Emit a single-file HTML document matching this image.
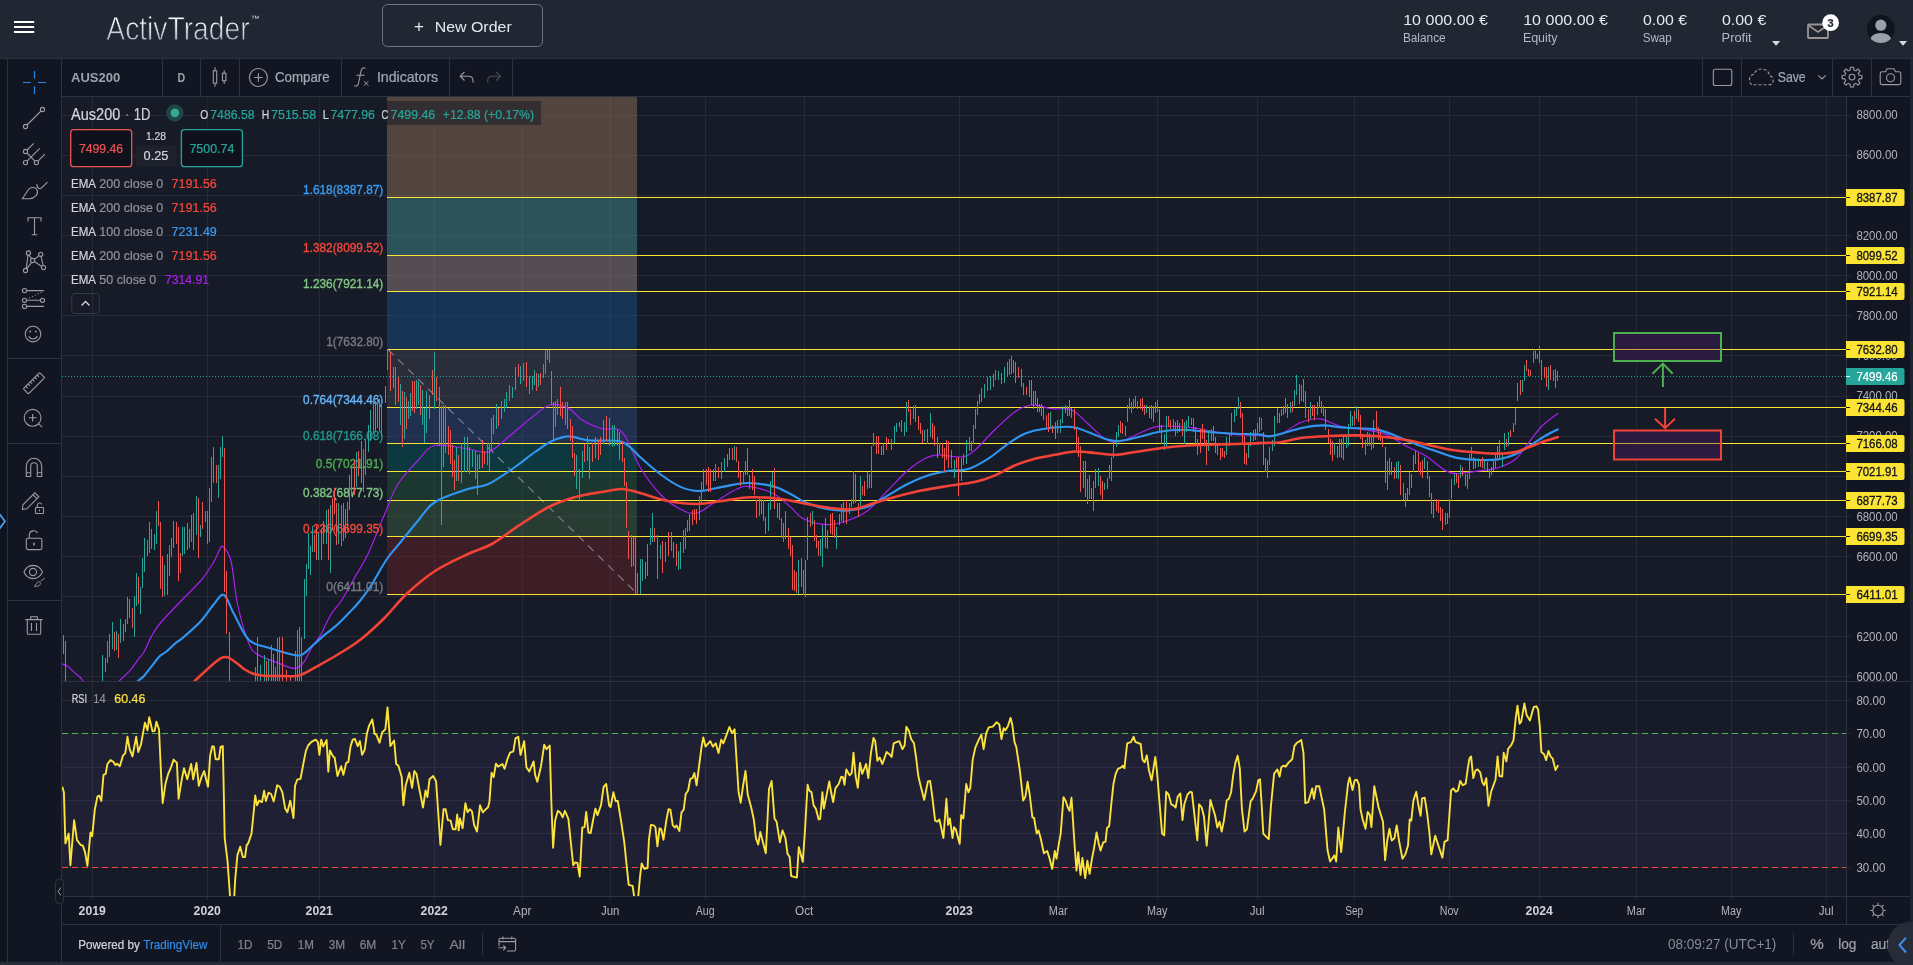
<!DOCTYPE html>
<html><head><meta charset="utf-8"><title>ActivTrader</title>
<style>
html,body{margin:0;padding:0}
body{width:1913px;height:965px;overflow:hidden;background:#10141f;position:relative;font-family:"Liberation Sans", sans-serif;}
svg{position:absolute;left:0;top:0;will-change:transform}
text{font-family:"Liberation Sans", sans-serif}
</style></head><body>
<svg width="1913" height="965" viewBox="0 0 1913 965">
<defs><clipPath id="cm"><rect x="62" y="97" width="1784" height="584"/></clipPath><clipPath id="cr"><rect x="62" y="682" width="1784" height="214"/></clipPath><linearGradient id="lg" x1="0" y1="0" x2="0" y2="1"><stop offset="0.25" stop-color="#ffffff"/><stop offset="1" stop-color="#8fa0ba"/></linearGradient></defs>
<rect x="8" y="59" width="54" height="903" fill="#121622"/>
<rect x="62" y="59" width="1848" height="903" fill="#121622"/>
<rect x="62" y="97" width="1784" height="584" fill="#171b27"/>
<rect x="62" y="682" width="1784" height="214" fill="#171b27"/>
<rect x="1910" y="58.5" width="3" height="907" fill="#1e2430"/>
<rect x="0" y="961.8" width="1913" height="3.2" fill="#272c38"/>
<path d="M92.5 97 V900 M207.5 97 V900 M319.5 97 V900 M434.5 97 V900 M522.5 97 V900 M610.5 97 V900 M705.5 97 V900 M804.5 97 V900 M959.5 97 V900 M1058.5 97 V900 M1157.5 97 V900 M1257.5 97 V900 M1354.5 97 V900 M1449.5 97 V900 M1539.5 97 V900 M1636.5 97 V900 M1731.5 97 V900 M1826.5 97 V900 M62 676.5 H1850 M62 636.5 H1850 M62 596.5 H1850 M62 556.5 H1850 M62 516.5 H1850 M62 476.5 H1850 M62 436.5 H1850 M62 396.5 H1850 M62 355.5 H1850 M62 315.5 H1850 M62 275.5 H1850 M62 235.5 H1850 M62 195.5 H1850 M62 155.5 H1850 M62 115.5 H1850 M62 867.5 H1850 M62 833.5 H1850 M62 800.5 H1850 M62 767.5 H1850 M62 733.5 H1850 M62 700.5 H1850" stroke="#262a38" stroke-width="1" fill="none"/>
<rect x="387" y="97.0" width="250" height="100.5" fill="rgba(141,111,85,0.5)"/>
<rect x="387" y="197.5" width="250" height="58.0" fill="rgba(65,137,141,0.5)"/>
<rect x="387" y="255.5" width="250" height="36.0" fill="rgba(145,129,125,0.5)"/>
<rect x="387" y="291.5" width="250" height="58.0" fill="rgba(25,77,129,0.5)"/>
<rect x="387" y="349.5" width="250" height="58.0" fill="rgba(61,65,77,0.5)"/>
<rect x="387" y="407.5" width="250" height="36.0" fill="rgba(41,69,117,0.5)"/>
<rect x="387" y="443.5" width="250" height="28.0" fill="rgba(5,85,89,0.5)"/>
<rect x="387" y="471.5" width="250" height="29.0" fill="rgba(33,81,57,0.5)"/>
<rect x="387" y="500.5" width="250" height="36.0" fill="rgba(57,93,65,0.5)"/>
<rect x="387" y="536.5" width="250" height="58.0" fill="rgba(101,33,37,0.5)"/>
<path d="M388 349.5 L637.5 594" stroke="#9598a1" stroke-width="1.2" stroke-dasharray="8 6" fill="none" opacity="0.75"/>
<path d="M387 197.5 H1846M387 255.5 H1846M387 291.5 H1846M387 349.5 H1846M387 407.5 H1846M387 443.5 H1846M387 471.5 H1846M387 500.5 H1846M387 536.5 H1846M387 594.5 H1846" stroke="#fbe434" stroke-width="1.2" fill="none"/>
<path d="M62 376.5 H1846" stroke="#26a69a" stroke-width="1" stroke-dasharray="1 2" fill="none"/>
<g clip-path="url(#cm)" fill="none" stroke-linejoin="round" stroke-linecap="round">
<path d="M62.0 663.8C63.1 664.3 66.5 665.4 68.4 666.7C70.3 668.1 71.7 670.2 73.6 671.9C75.5 673.6 78.2 675.5 79.8 677.0C81.4 678.5 81.3 678.8 83.0 681.0C84.7 683.2 85.2 688.5 90.0 690.0C94.8 691.5 107.1 691.5 112.0 690.0C116.9 688.5 116.1 684.4 119.2 681.0C122.3 677.6 127.3 673.6 130.6 669.8C133.9 666.0 136.7 661.4 138.9 658.4C141.1 655.4 141.9 655.6 144.0 652.0C146.1 648.4 148.6 641.4 151.3 636.6C154.0 631.9 155.1 629.4 160.0 623.5C164.9 617.6 174.2 608.2 181.0 601.0C187.8 593.8 196.2 586.0 201.0 580.5C205.8 575.0 207.6 571.4 209.9 568.0C212.2 564.6 213.3 562.8 214.8 560.0C216.3 557.2 217.7 553.2 219.0 551.0C220.3 548.8 220.8 544.8 222.8 546.5C224.8 548.2 228.6 551.4 231.0 561.0C233.4 570.6 234.7 590.8 237.5 604.0C240.3 617.2 244.5 631.8 247.6 640.0C250.7 648.2 250.7 649.6 256.0 653.5C261.3 657.4 273.2 661.1 279.6 663.6C286.0 666.1 290.3 668.4 294.2 668.4C298.1 668.4 300.1 666.8 303.0 663.4C305.9 660.0 308.8 652.4 311.7 647.7C314.6 643.0 317.4 640.6 320.5 635.1C323.6 629.6 327.0 620.9 330.6 615.0C334.2 609.1 337.9 606.2 341.9 600.0C345.9 593.8 350.2 585.3 354.6 577.6C359.0 569.9 363.0 564.6 368.0 554.0C373.0 543.4 379.7 525.7 384.7 514.0C389.7 502.3 392.4 492.9 398.0 484.0C403.6 475.1 411.8 466.9 418.0 460.5C424.2 454.1 426.7 447.4 435.0 445.5C443.3 443.6 459.1 447.9 468.0 449.0C476.9 450.1 481.8 454.0 488.5 452.0C495.2 450.0 501.8 442.3 508.5 437.0C515.2 431.7 521.7 425.3 528.6 420.0C535.5 414.7 543.3 406.9 550.0 405.0C556.7 403.1 563.7 406.1 569.0 408.6C574.3 411.1 576.5 416.6 582.0 420.0C587.5 423.4 595.3 426.7 602.0 428.7C608.7 430.7 615.7 425.6 622.0 432.0C628.3 438.4 633.7 456.7 640.0 467.0C646.3 477.3 653.3 487.0 660.0 494.0C666.7 501.0 673.8 505.8 680.0 509.0C686.2 512.2 690.8 514.4 697.0 513.0C703.2 511.6 710.3 504.7 717.0 500.7C723.7 496.7 731.5 491.4 737.0 489.0C742.5 486.6 743.8 485.8 750.0 486.6C756.2 487.4 767.2 490.6 774.0 494.0C780.8 497.4 785.5 502.8 790.5 507.0C795.5 511.2 797.9 516.0 804.0 519.0C810.1 522.0 819.8 524.4 827.0 524.7C834.2 525.0 840.2 523.0 847.0 520.7C853.8 518.4 860.7 515.7 867.5 510.7C874.3 505.7 880.9 497.3 887.6 490.6C894.3 483.9 901.5 475.8 907.6 470.5C913.7 465.2 919.0 461.6 924.0 459.0C929.0 456.4 931.5 455.1 937.7 454.8C943.9 454.5 954.9 457.7 961.0 457.0C967.1 456.3 968.9 455.0 974.5 450.5C980.1 446.0 987.9 436.4 994.6 430.0C1001.3 423.6 1008.6 416.2 1014.7 412.0C1020.8 407.8 1025.3 405.6 1031.4 405.0C1037.5 404.4 1044.8 407.8 1051.5 408.6C1058.2 409.4 1065.4 407.5 1071.5 410.0C1077.6 412.5 1082.4 418.9 1088.0 423.7C1093.6 428.5 1099.9 435.8 1105.0 438.8C1110.1 441.9 1112.8 442.9 1118.4 442.0C1124.0 441.1 1131.8 436.3 1138.5 433.7C1145.2 431.1 1149.6 427.4 1158.5 426.4C1167.4 425.4 1180.8 426.5 1192.0 427.7C1203.2 428.9 1214.3 432.4 1225.5 433.7C1236.7 435.0 1249.9 435.3 1259.0 435.4C1268.1 435.5 1273.2 436.5 1280.0 434.4C1286.8 432.3 1293.3 425.4 1300.0 422.8C1306.7 420.2 1313.4 418.3 1320.0 418.8C1326.6 419.3 1332.5 424.2 1339.7 426.0C1346.9 427.8 1355.3 428.0 1363.0 429.4C1370.7 430.8 1378.8 431.6 1386.0 434.4C1393.2 437.2 1399.3 442.4 1406.0 446.0C1412.7 449.6 1419.4 451.9 1426.0 456.0C1432.6 460.1 1440.3 468.0 1445.8 470.9C1451.3 473.8 1453.5 473.5 1459.0 473.5C1464.5 473.5 1472.4 471.9 1479.0 470.9C1485.6 469.9 1492.7 469.4 1498.8 467.5C1504.9 465.6 1510.4 463.4 1515.4 459.3C1520.4 455.2 1524.3 448.2 1528.7 442.7C1533.1 437.1 1537.2 430.9 1542.0 426.0C1546.8 421.1 1555.2 415.6 1557.8 413.5" stroke="#aa1ef0" stroke-width="1.2"/>
<path d="M132.0 688.0C133.0 686.8 135.9 683.0 137.9 681.0C139.9 679.0 141.8 678.4 144.0 676.0C146.2 673.6 148.7 670.0 151.3 666.7C153.9 663.4 157.2 658.8 159.6 656.3C162.0 653.8 163.1 654.2 165.8 652.0C168.5 649.8 173.3 645.0 176.0 642.8C178.7 640.5 177.8 642.1 182.0 638.5C186.2 634.9 195.7 626.8 201.0 621.0C206.3 615.2 210.2 608.3 214.0 604.0C217.8 599.7 220.7 593.3 224.0 595.0C227.3 596.7 229.8 606.5 234.0 614.0C238.2 621.5 243.1 634.3 249.0 640.0C254.9 645.7 261.8 645.5 269.5 648.0C277.2 650.5 289.8 654.2 295.4 655.2C301.0 656.2 300.1 655.7 303.0 654.0C305.9 652.3 309.4 648.4 313.0 645.2C316.6 642.1 320.3 638.5 324.3 635.1C328.3 631.8 332.6 628.9 336.8 625.1C341.0 621.3 345.4 616.7 349.4 612.5C353.4 608.3 356.9 604.8 360.7 600.0C364.5 595.2 367.7 590.8 372.0 584.0C376.3 577.2 381.7 566.7 386.6 559.5C391.5 552.3 396.3 547.5 401.5 541.0C406.7 534.5 412.4 527.2 418.0 520.7C423.6 514.2 426.7 507.3 435.0 502.0C443.3 496.7 459.1 492.0 468.0 489.0C476.9 486.0 480.7 487.7 488.5 484.0C496.3 480.3 507.2 472.3 515.0 467.0C522.8 461.7 528.8 456.3 535.0 452.0C541.2 447.7 546.3 443.6 552.0 441.0C557.7 438.4 562.8 436.5 569.0 436.4C575.2 436.3 580.7 439.6 589.0 440.4C597.3 441.2 611.8 439.6 619.0 441.0C626.2 442.4 628.5 446.3 632.0 449.0C635.5 451.7 635.3 452.8 640.0 457.0C644.7 461.2 653.3 469.1 660.0 474.0C666.7 478.9 673.6 483.8 680.0 486.6C686.4 489.4 691.2 491.0 698.5 491.0C705.8 491.0 715.5 487.9 723.6 486.6C731.7 485.3 738.6 483.0 747.0 483.0C755.4 483.0 766.8 484.8 774.0 486.6C781.2 488.4 785.0 491.3 790.5 494.0C796.0 496.7 800.9 500.5 807.0 503.0C813.1 505.5 820.3 507.7 827.0 509.0C833.7 510.3 840.2 511.1 847.0 510.7C853.8 510.3 860.7 509.2 867.5 506.7C874.3 504.2 880.9 499.4 887.6 495.6C894.3 491.8 900.9 487.3 907.6 484.0C914.3 480.7 921.0 477.8 927.7 475.6C934.4 473.4 941.1 472.1 947.8 471.0C954.5 469.9 961.3 471.0 968.0 469.0C974.7 467.0 981.3 463.0 988.0 458.8C994.7 454.6 1001.9 448.0 1008.0 443.8C1014.1 439.6 1018.6 436.2 1024.7 433.7C1030.8 431.2 1037.0 429.8 1044.8 428.7C1052.6 427.6 1064.3 426.4 1071.5 427.0C1078.7 427.6 1082.4 430.0 1088.0 432.0C1093.6 434.0 1099.9 437.3 1105.0 438.8C1110.1 440.3 1112.8 441.3 1118.4 441.0C1124.0 440.7 1131.8 438.5 1138.5 437.0C1145.2 435.5 1151.2 433.2 1158.5 432.0C1165.8 430.8 1173.6 429.7 1182.0 429.7C1190.4 429.7 1199.8 431.3 1208.7 432.0C1217.6 432.7 1227.1 433.3 1235.5 433.7C1243.9 434.1 1253.4 433.9 1259.0 434.4C1264.6 434.8 1265.5 436.5 1269.0 436.4C1272.5 436.3 1274.3 435.4 1280.0 434.0C1285.7 432.6 1295.8 429.2 1303.0 427.8C1310.2 426.4 1315.8 425.4 1323.0 425.4C1330.2 425.4 1337.2 427.1 1346.0 427.8C1354.8 428.5 1367.7 428.0 1376.0 429.4C1384.3 430.8 1389.3 433.5 1396.0 436.0C1402.7 438.5 1409.4 441.8 1416.0 444.3C1422.6 446.8 1429.2 448.8 1435.8 451.0C1442.4 453.2 1448.5 456.1 1455.7 457.6C1462.9 459.1 1471.8 459.7 1479.0 460.0C1486.2 460.3 1492.7 460.2 1498.8 459.3C1504.9 458.4 1509.9 456.8 1515.4 454.3C1520.9 451.8 1527.1 447.4 1532.0 444.3C1536.9 441.2 1540.7 438.5 1545.0 436.0C1549.3 433.5 1555.7 430.5 1557.8 429.4" stroke="#2f96f3" stroke-width="2.1"/>
</g>
<text x="383.3" y="193.9" font-size="12" fill="#3a9cf2" text-anchor="end" textLength="80.2" lengthAdjust="spacingAndGlyphs" stroke="#3a9cf2" stroke-width="0.35">1.618(8387.87)</text>
<text x="383.3" y="251.9" font-size="12" fill="#f4483a" text-anchor="end" textLength="80.2" lengthAdjust="spacingAndGlyphs" stroke="#f4483a" stroke-width="0.35">1.382(8099.52)</text>
<text x="383.3" y="287.9" font-size="12" fill="#81c784" text-anchor="end" textLength="80.2" lengthAdjust="spacingAndGlyphs" stroke="#81c784" stroke-width="0.35">1.236(7921.14)</text>
<text x="383.3" y="345.9" font-size="12" fill="#787b86" text-anchor="end" textLength="57.0" lengthAdjust="spacingAndGlyphs" stroke="#787b86" stroke-width="0.35">1(7632.80)</text>
<text x="383.3" y="403.9" font-size="12" fill="#64b5f6" text-anchor="end" textLength="80.2" lengthAdjust="spacingAndGlyphs" stroke="#64b5f6" stroke-width="0.35">0.764(7344.46)</text>
<text x="383.3" y="439.9" font-size="12" fill="#1f9a8e" text-anchor="end" textLength="80.2" lengthAdjust="spacingAndGlyphs" stroke="#1f9a8e" stroke-width="0.35">0.618(7166.08)</text>
<text x="383.3" y="467.9" font-size="12" fill="#4caf50" text-anchor="end" textLength="67.5" lengthAdjust="spacingAndGlyphs" stroke="#4caf50" stroke-width="0.35">0.5(7021.91)</text>
<text x="383.3" y="496.9" font-size="12" fill="#81c784" text-anchor="end" textLength="80.2" lengthAdjust="spacingAndGlyphs" stroke="#81c784" stroke-width="0.35">0.382(6877.73)</text>
<text x="383.3" y="532.9" font-size="12" fill="#f4483a" text-anchor="end" textLength="80.2" lengthAdjust="spacingAndGlyphs" stroke="#f4483a" stroke-width="0.35">0.236(6699.35)</text>
<text x="383.3" y="590.9" font-size="12" fill="#787b86" text-anchor="end" textLength="57.0" lengthAdjust="spacingAndGlyphs" stroke="#787b86" stroke-width="0.35">0(6411.01)</text>
<g clip-path="url(#cm)" shape-rendering="crispEdges">
<path d="M102.5 655.3 V680.9M107.5 640.5 V663.4M109.5 633.8 V656.7M112.5 621.7 V648.6M116.5 631.1 V649.9M120.5 619.0 V643.2M123.5 624.3 V640.5M125.5 619.0 V632.4M127.5 597.4 V624.3M134.5 596.1 V636.5M136.5 573.2 V605.5M140.5 586.6 V613.6M142.5 558.3 V588.0M144.5 538.1 V571.8M149.5 522.0 V553.0M151.5 528.7 V548.9M154.5 534.1 V550.3M156.5 511.2 V543.5M164.5 565.1 V596.1M167.5 554.3 V594.7M169.5 544.9 V575.9M171.5 538.1 V557.0M173.5 520.6 V547.6M182.5 527.4 V555.7M184.5 527.4 V554.3M189.5 528.7 V547.6M191.5 515.2 V542.2M193.5 512.6 V550.3M196.5 496.4 V535.4M200.5 524.7 V536.8M205.5 511.2 V522.0M209.5 488.3 V542.2M211.5 457.3 V501.8M213.5 446.6 V482.9M218.5 465.4 V497.7M220.5 446.6 V478.9M222.5 435.8 V457.3M255.5 667.4 V683.6M260.5 664.8 V683.6M264.5 655.3 V683.6M268.5 659.4 V683.6M275.5 667.4 V683.6M277.5 637.8 V683.6M295.5 651.3 V683.6M297.5 629.7 V683.6M301.5 636.5 V683.6M304.5 578.6 V639.2M306.5 563.7 V596.1M308.5 532.8 V569.1M310.5 546.2 V574.5M312.5 526.0 V551.6M318.5 532.8 V559.7M323.5 520.6 V543.5M326.5 509.9 V543.5M330.5 504.5 V573.2M338.5 503.1 V543.5M341.5 504.5 V546.2M343.5 503.1 V540.8M345.5 508.5 V538.1M347.5 501.8 V531.4M349.5 474.8 V509.9M351.5 465.4 V496.4M356.5 451.9 V487.0M363.5 449.2 V492.3M365.5 438.5 V474.8M368.5 425.0 V451.9M370.5 409.8 V440.5M373.5 400.0 V433.5M377.5 395.8 V428.0M381.5 395.8 V435.8M387.5 349.0 V370.0M400.5 383.8 V424.5M404.5 392.4 V438.6M408.5 400.8 V419.0M410.5 392.7 V415.6M416.5 379.8 V409.2M418.5 381.2 V405.0M422.5 389.6 V424.6M424.5 407.8 V442.8M426.5 391.0 V433.0M434.5 351.8 V409.2M445.5 405.0 V452.6M456.5 447.0 V480.5M461.5 442.8 V483.3M464.5 437.2 V472.2M472.5 449.8 V466.6M479.5 454.0 V469.4M487.5 442.8 V465.2M489.5 442.8 V470.8M491.5 417.6 V451.2M496.5 403.6 V428.8M501.5 400.8 V419.0M504.5 399.4 V412.0M506.5 392.4 V407.8M509.5 385.4 V400.8M512.5 386.8 V398.0M520.5 365.8 V384.0M523.5 363.0 V381.2M532.5 375.6 V389.6M534.5 370.0 V385.4M538.5 374.2 V386.8M543.5 364.4 V378.4M545.5 350.4 V374.2M547.5 350.4 V360.2M549.5 350.4 V363.0M555.5 401.1 V426.8M576.5 455.4 V488.9M582.5 451.2 V477.7M595.5 437.2 V458.2M603.5 420.4 V444.2M612.5 424.6 V447.0M614.5 424.6 V445.6M617.5 430.2 V445.6M640.5 558.9 V593.9M642.5 558.9 V581.3M650.5 528.1 V544.9M652.5 512.7 V542.1M660.5 544.9 V558.9M665.5 542.1 V561.7M678.5 550.5 V570.1M680.5 542.1 V568.7M683.5 529.5 V553.3M685.5 528.1 V549.1M687.5 519.7 V532.3M689.5 514.1 V530.9M699.5 495.9 V519.7M701.5 481.9 V502.9M703.5 469.4 V490.3M713.5 469.4 V480.5M715.5 463.8 V480.5M721.5 462.4 V479.1M724.5 458.2 V472.2M734.5 446.4 V460.3M743.5 470.8 V483.3M768.5 502.9 V530.9M770.5 480.5 V509.9M772.5 472.2 V487.5M781.5 518.3 V537.9M783.5 522.5 V542.1M798.5 560.3 V593.9M805.5 560.3 V596.7M807.5 516.9 V560.3M812.5 511.3 V525.3M820.5 539.3 V556.1M822.5 525.3 V567.3M836.5 526.7 V549.1M841.5 504.3 V521.1M849.5 502.9 V514.1M851.5 498.7 V507.1M853.5 470.8 V504.3M860.5 476.3 V505.7M871.5 445.6 V487.5M873.5 433.0 V445.6M894.5 426.0 V442.8M896.5 423.2 V431.6M904.5 421.8 V435.8M906.5 402.2 V431.6M913.5 406.4 V419.0M924.5 430.2 V441.4M930.5 413.4 V437.2M951.5 449.8 V468.0M954.5 459.6 V477.7M961.5 458.2 V480.5M963.5 454.0 V465.2M966.5 440.0 V463.8M973.5 424.6 V444.2M975.5 409.2 V428.8M977.5 400.8 V414.8M981.5 388.2 V402.2M984.5 384.0 V398.0M987.5 377.0 V391.0M990.5 375.6 V389.6M995.5 370.0 V379.8M998.5 371.4 V379.8M1004.5 367.2 V382.6M1007.5 361.6 V375.6M1009.5 358.8 V374.9M1011.5 356.0 V374.2M1035.5 391.0 V405.0M1050.5 412.0 V427.4M1057.5 420.4 V433.0M1060.5 419.0 V433.0M1062.5 406.4 V423.2M1065.5 405.0 V413.4M1087.5 479.1 V504.3M1093.5 480.5 V511.3M1095.5 469.4 V487.5M1098.5 468.0 V486.1M1104.5 483.3 V490.3M1107.5 477.7 V488.9M1109.5 465.2 V479.1M1111.5 456.8 V480.5M1113.5 441.4 V458.2M1116.5 431.6 V447.0M1118.5 424.6 V437.2M1127.5 405.0 V421.8M1131.5 402.2 V413.4M1133.5 398.8 V409.2M1137.5 400.8 V409.2M1146.5 405.0 V413.4M1155.5 402.2 V413.4M1164.5 434.4 V449.8M1166.5 416.2 V445.6M1177.5 420.4 V433.0M1184.5 421.8 V444.2M1186.5 420.4 V431.6M1188.5 416.2 V427.4M1208.5 430.2 V451.2M1211.5 428.8 V441.4M1226.5 437.2 V455.4M1231.5 413.4 V435.8M1234.5 409.2 V421.8M1236.5 407.8 V416.2M1238.5 397.1 V409.2M1248.5 442.8 V458.2M1250.5 431.6 V445.6M1253.5 430.2 V441.4M1255.5 428.8 V440.0M1257.5 423.2 V434.4M1261.5 417.6 V430.2M1269.5 447.0 V465.2M1272.5 440.0 V451.2M1274.5 416.2 V445.6M1277.5 407.8 V423.2M1281.5 409.2 V416.2M1283.5 406.4 V414.8M1290.5 402.2 V413.4M1294.5 389.6 V406.4M1296.5 375.0 V395.2M1301.5 385.4 V400.8M1310.5 402.2 V419.0M1317.5 402.2 V414.8M1334.5 442.8 V455.4M1339.5 438.6 V456.8M1343.5 437.2 V459.6M1346.5 437.2 V448.4M1348.5 424.0 V445.6M1350.5 410.6 V427.4M1352.5 416.2 V426.0M1356.5 406.4 V419.0M1367.5 431.6 V445.6M1371.5 437.2 V449.8M1373.5 420.4 V448.4M1387.5 461.0 V490.3M1389.5 458.2 V474.9M1396.5 462.4 V477.7M1398.5 461.0 V479.1M1403.5 483.3 V500.1M1409.5 472.2 V494.5M1411.5 473.5 V487.5M1413.5 455.4 V472.2M1424.5 456.8 V469.4M1445.5 512.7 V525.3M1447.5 512.7 V523.9M1449.5 498.7 V518.3M1451.5 479.1 V498.7M1454.5 473.5 V484.7M1460.5 465.2 V477.7M1467.5 473.5 V488.9M1469.5 454.0 V479.1M1478.5 458.2 V466.6M1484.5 461.0 V469.4M1497.5 445.6 V461.0M1502.5 452.6 V466.6M1504.5 433.0 V449.8M1508.5 431.6 V445.6M1515.5 407.8 V424.6M1517.5 382.6 V400.8M1522.5 379.8 V392.4M1524.5 365.2 V381.2M1533.5 351.2 V363.0M1535.5 349.0 V358.8M1537.5 354.0 V358.8M1548.5 367.2 V389.6M1557.5 371.4 V381.2" stroke="#26a69a" stroke-width="1" fill="none"/>
<path d="M105.5 658.0 V671.5M114.5 632.4 V651.3M118.5 633.8 V658.0M129.5 598.8 V617.6M132.5 608.2 V628.4M138.5 577.2 V604.1M147.5 539.5 V555.7M158.5 501.0 V526.0M160.5 522.0 V589.3M162.5 555.7 V597.4M176.5 522.0 V543.5M178.5 527.4 V581.2M180.5 553.0 V573.2M187.5 523.3 V550.3M198.5 497.7 V558.3M202.5 501.8 V528.7M207.5 511.2 V543.5M216.5 465.4 V482.9M224.5 447.9 V592.0M226.5 570.5 V633.8M229.5 632.4 V683.6M257.5 636.5 V683.6M266.5 660.7 V683.6M271.5 644.6 V683.6M273.5 654.0 V683.6M279.5 636.5 V683.6M282.5 636.5 V683.6M286.5 670.1 V683.6M290.5 675.5 V683.6M299.5 627.0 V683.6M314.5 535.4 V551.6M316.5 526.0 V559.7M321.5 528.7 V559.7M328.5 508.5 V559.7M332.5 497.7 V530.1M334.5 488.3 V513.9M336.5 503.1 V544.9M354.5 460.0 V495.0M358.5 450.6 V476.2M361.5 441.2 V482.9M63.5 635.0 V653.7M65.5 640.8 V683.0M375.5 401.4 V432.0M379.5 398.6 V430.8M385.5 386.0 V402.8M390.5 351.8 V391.0M393.5 367.2 V388.2M395.5 367.2 V405.0M398.5 377.0 V402.2M402.5 391.0 V447.0M406.5 396.8 V428.9M412.5 381.2 V410.6M414.5 381.2 V413.4M420.5 385.2 V414.7M429.5 395.2 V419.0M432.5 370.0 V395.2M436.5 377.0 V400.8M439.5 386.8 V445.6M441.5 406.4 V525.3M443.5 405.0 V466.6M448.5 426.0 V455.4M450.5 430.2 V463.8M452.5 444.9 V477.1M454.5 459.6 V490.3M458.5 455.4 V480.5M467.5 437.2 V472.2M469.5 447.0 V473.5M475.5 451.2 V479.1M477.5 455.4 V494.5M482.5 440.0 V468.0M484.5 451.2 V463.8M493.5 414.8 V434.4M498.5 407.8 V426.0M515.5 367.2 V389.6M518.5 364.4 V377.0M526.5 361.6 V386.8M529.5 375.6 V393.8M536.5 372.8 V391.0M540.5 372.8 V385.4M551.5 371.4 V405.0M553.5 402.2 V438.6M557.5 399.4 V414.8M560.5 386.8 V416.2M562.5 402.2 V419.0M565.5 402.2 V424.6M567.5 402.2 V428.8M570.5 419.0 V441.4M572.5 426.0 V458.2M574.5 452.6 V476.3M579.5 469.4 V500.1M584.5 444.2 V462.4M587.5 435.8 V461.0M589.5 447.0 V479.1M592.5 442.8 V462.4M598.5 440.0 V459.6M600.5 437.2 V455.4M606.5 416.2 V441.4M609.5 417.6 V445.6M619.5 431.6 V459.6M622.5 441.4 V462.4M624.5 458.2 V486.1M626.5 481.9 V528.1M628.5 530.9 V558.9M631.5 535.1 V567.3M633.5 536.5 V565.9M635.5 536.5 V593.9M637.5 572.9 V593.9M645.5 561.7 V578.5M647.5 543.5 V575.7M654.5 528.1 V542.1M657.5 535.1 V578.5M662.5 540.7 V572.9M668.5 532.3 V556.1M671.5 532.3 V550.5M673.5 542.1 V557.5M676.5 543.5 V565.9M692.5 509.9 V525.3M694.5 508.5 V519.7M696.5 508.5 V523.9M706.5 469.4 V484.7M708.5 466.6 V491.7M710.5 469.4 V491.7M718.5 466.6 V477.7M727.5 454.0 V466.6M729.5 448.4 V459.6M732.5 448.4 V459.6M736.5 447.0 V462.4M738.5 461.0 V477.7M740.5 472.2 V486.1M745.5 461.0 V474.9M747.5 448.4 V474.9M749.5 474.9 V488.9M752.5 469.4 V490.3M754.5 476.3 V494.5M756.5 500.1 V518.3M759.5 497.3 V515.5M761.5 498.7 V514.1M763.5 500.1 V521.1M765.5 516.9 V533.7M774.5 468.0 V508.5M777.5 502.9 V518.3M779.5 502.9 V519.7M785.5 511.3 V539.3M788.5 528.1 V549.1M790.5 536.5 V556.1M792.5 544.9 V589.7M794.5 570.1 V591.1M796.5 571.5 V592.5M801.5 557.5 V586.9M803.5 570.1 V595.3M810.5 512.7 V526.7M814.5 519.7 V540.7M816.5 535.1 V547.7M818.5 540.7 V556.1M825.5 518.3 V547.7M827.5 529.5 V549.1M830.5 514.1 V533.7M832.5 512.7 V535.1M834.5 519.7 V537.9M839.5 514.1 V525.3M843.5 501.5 V522.5M846.5 500.1 V523.9M855.5 473.5 V502.9M858.5 502.9 V516.9M862.5 486.1 V494.5M864.5 480.5 V495.9M867.5 472.2 V488.9M869.5 473.5 V487.5M876.5 435.8 V454.0M878.5 435.8 V454.0M881.5 445.6 V455.4M883.5 442.8 V455.4M886.5 437.2 V449.8M888.5 438.6 V442.8M891.5 438.6 V449.8M899.5 421.8 V427.4M901.5 420.4 V431.6M908.5 399.9 V412.0M910.5 409.2 V424.6M915.5 405.0 V421.8M918.5 416.2 V430.2M920.5 423.2 V434.4M922.5 430.2 V442.8M927.5 428.8 V444.2M932.5 423.2 V438.6M934.5 426.0 V445.6M937.5 437.2 V458.2M939.5 442.8 V454.0M942.5 442.8 V458.2M944.5 448.4 V472.2M946.5 440.0 V459.6M948.5 441.4 V468.0M956.5 458.2 V468.0M958.5 456.8 V495.9M969.5 437.2 V451.2M971.5 441.4 V451.2M979.5 393.8 V403.6M993.5 374.2 V386.8M1001.5 372.8 V384.0M1013.5 360.2 V372.8M1015.5 361.6 V382.6M1018.5 367.2 V378.4M1021.5 368.6 V386.8M1023.5 382.6 V395.2M1026.5 386.8 V395.2M1029.5 379.8 V396.6M1031.5 379.8 V405.0M1033.5 391.0 V409.2M1037.5 398.0 V412.0M1039.5 403.6 V412.0M1041.5 403.6 V416.2M1043.5 407.8 V420.4M1046.5 414.8 V427.4M1048.5 413.4 V431.6M1052.5 424.6 V433.0M1055.5 421.8 V438.6M1067.5 406.4 V416.2M1069.5 399.9 V416.2M1071.5 407.8 V417.6M1074.5 409.2 V430.2M1076.5 428.8 V449.8M1078.5 437.2 V456.8M1080.5 445.6 V491.7M1083.5 461.0 V487.5M1085.5 461.0 V497.3M1089.5 474.9 V498.7M1091.5 487.5 V498.7M1100.5 476.3 V494.5M1102.5 480.5 V500.1M1120.5 421.2 V433.0M1122.5 423.2 V434.4M1125.5 426.0 V435.8M1129.5 398.0 V409.2M1135.5 396.0 V407.8M1140.5 399.4 V409.2M1142.5 398.0 V410.6M1144.5 405.0 V414.8M1149.5 406.4 V417.6M1151.5 405.0 V419.0M1153.5 406.4 V421.8M1157.5 399.9 V412.0M1159.5 409.2 V431.6M1161.5 424.6 V444.2M1168.5 416.2 V427.4M1170.5 420.4 V428.8M1173.5 419.0 V430.2M1175.5 421.8 V435.8M1179.5 423.2 V431.6M1182.5 419.0 V435.8M1191.5 417.6 V424.6M1193.5 417.6 V431.6M1195.5 427.4 V444.2M1197.5 438.6 V455.4M1200.5 428.8 V452.6M1202.5 424.0 V438.6M1204.5 428.8 V445.6M1206.5 440.0 V465.2M1213.5 426.0 V441.4M1215.5 437.2 V452.6M1217.5 444.2 V455.4M1220.5 448.4 V459.6M1222.5 448.4 V456.8M1224.5 451.2 V458.2M1229.5 434.4 V445.6M1240.5 402.2 V417.6M1242.5 413.4 V444.2M1244.5 435.8 V463.8M1246.5 452.6 V465.2M1259.5 417.0 V431.6M1263.5 431.6 V465.2M1265.5 458.2 V472.2M1267.5 459.6 V477.7M1279.5 413.4 V423.2M1285.5 398.0 V413.4M1287.5 403.6 V417.6M1292.5 400.8 V412.0M1299.5 384.0 V403.6M1303.5 379.2 V402.2M1305.5 391.0 V417.6M1308.5 409.2 V421.8M1312.5 405.0 V416.2M1314.5 405.0 V420.4M1319.5 396.0 V407.8M1321.5 400.8 V413.4M1323.5 406.4 V416.2M1325.5 409.2 V430.2M1328.5 428.8 V442.8M1330.5 438.6 V455.4M1332.5 441.4 V461.0M1337.5 445.6 V458.2M1341.5 438.6 V458.2M1354.5 410.6 V424.6M1358.5 409.2 V421.8M1360.5 414.8 V438.6M1362.5 434.4 V448.4M1365.5 440.0 V455.4M1369.5 433.0 V445.6M1376.5 410.6 V430.2M1378.5 427.4 V440.0M1380.5 431.6 V441.4M1382.5 435.8 V447.0M1385.5 447.0 V483.3M1391.5 462.4 V474.9M1394.5 466.6 V479.1M1400.5 465.2 V494.5M1405.5 493.1 V507.1M1407.5 487.5 V500.1M1415.5 451.2 V463.8M1418.5 452.6 V472.2M1420.5 462.4 V474.9M1422.5 459.6 V477.7M1427.5 461.0 V479.1M1429.5 476.3 V497.3M1431.5 493.1 V514.1M1433.5 501.5 V518.3M1436.5 498.7 V511.3M1438.5 500.1 V512.7M1440.5 507.1 V521.1M1442.5 508.5 V529.5M1456.5 473.5 V483.3M1458.5 474.9 V487.5M1462.5 466.6 V476.3M1465.5 473.5 V486.1M1471.5 447.0 V461.0M1473.5 456.8 V469.4M1475.5 458.2 V468.0M1480.5 459.6 V466.6M1482.5 456.8 V468.0M1487.5 462.4 V470.8M1489.5 469.4 V477.7M1491.5 466.6 V474.9M1493.5 461.0 V470.8M1495.5 455.4 V468.0M1499.5 440.0 V458.2M1506.5 438.6 V447.0M1510.5 429.6 V437.2M1513.5 423.2 V431.6M1520.5 379.8 V395.2M1526.5 360.2 V371.4M1528.5 368.6 V375.6M1530.5 370.0 V375.6M1539.5 346.2 V363.0M1541.5 360.2 V379.8M1544.5 367.2 V378.4M1546.5 367.2 V386.8M1550.5 365.2 V379.8M1553.5 370.0 V381.2M1555.5 368.6 V388.2" stroke="#ef5350" stroke-width="1" fill="none"/>
</g>
<g clip-path="url(#cm)" fill="none" stroke-linejoin="round" stroke-linecap="round"><path d="M193.7 682.0C197.3 678.7 210.2 666.2 215.6 662.0C221.0 657.8 222.6 656.9 226.0 657.0C229.4 657.1 233.0 660.5 236.0 662.5C239.0 664.5 241.2 667.2 244.0 669.0C246.8 670.8 249.6 672.4 252.6 673.5C255.6 674.6 258.1 675.1 262.0 675.5C265.9 675.9 270.3 675.9 276.0 676.0C281.7 676.1 291.3 676.4 296.0 676.0C300.7 675.6 301.2 674.7 304.0 673.5C306.8 672.3 307.5 671.7 313.0 668.6C318.5 665.5 329.2 659.8 337.0 655.0C344.8 650.2 352.1 646.2 360.0 640.0C367.9 633.8 376.9 625.4 384.7 617.7C392.4 610.0 398.1 601.8 406.5 594.0C414.9 586.2 424.8 577.7 435.0 571.0C445.2 564.3 458.5 558.5 468.0 554.0C477.5 549.5 483.6 548.7 492.0 544.0C500.4 539.3 509.2 531.9 518.6 525.7C528.1 519.5 539.2 511.8 548.7 507.0C558.2 502.2 566.6 499.5 575.5 497.0C584.4 494.5 594.2 493.3 602.0 492.0C609.8 490.7 615.7 488.8 622.0 489.0C628.3 489.2 632.5 491.1 640.0 493.0C647.5 494.9 657.3 498.9 666.8 500.7C676.3 502.5 687.5 504.0 697.0 504.0C706.5 504.0 714.7 501.8 723.6 500.7C732.5 499.6 740.9 497.6 750.4 497.3C759.9 497.0 771.1 497.9 780.5 499.0C789.9 500.1 798.6 502.5 807.0 504.0C815.4 505.5 822.9 507.2 830.7 508.0C838.5 508.8 846.8 509.8 854.0 509.0C861.2 508.2 867.3 504.9 874.0 503.0C880.7 501.1 886.2 499.4 894.0 497.3C901.8 495.2 912.0 492.5 921.0 490.6C930.0 488.7 938.9 487.4 947.8 486.0C956.7 484.6 966.7 483.7 974.5 482.0C982.3 480.3 987.9 478.4 994.6 475.6C1001.3 472.9 1008.0 468.3 1014.7 465.5C1021.4 462.7 1028.1 460.6 1034.8 458.8C1041.5 457.0 1048.1 456.0 1054.8 454.8C1061.5 453.6 1068.3 451.8 1075.0 451.5C1081.7 451.2 1088.3 452.4 1095.0 453.0C1101.7 453.6 1108.3 455.0 1115.0 454.8C1121.7 454.6 1127.2 453.1 1135.0 452.0C1142.8 450.9 1153.0 449.1 1162.0 448.0C1171.0 446.9 1179.8 446.1 1188.7 445.5C1197.6 444.9 1206.6 444.8 1215.5 444.5C1224.4 444.2 1234.2 444.1 1242.0 443.8C1249.8 443.6 1255.7 443.3 1262.0 443.0C1268.3 442.7 1273.2 443.1 1280.0 442.2C1286.8 441.3 1294.7 438.7 1303.0 437.7C1311.3 436.7 1320.9 436.4 1329.7 436.0C1338.5 435.6 1347.2 435.3 1356.0 435.4C1364.8 435.5 1374.5 435.9 1382.8 436.7C1391.1 437.5 1398.3 438.6 1406.0 440.0C1413.7 441.4 1421.3 443.3 1429.0 445.0C1436.7 446.7 1444.1 448.7 1452.4 450.0C1460.7 451.3 1471.3 452.0 1479.0 452.6C1486.7 453.2 1492.7 453.7 1498.8 453.6C1504.9 453.5 1509.9 453.3 1515.4 452.0C1520.9 450.7 1527.1 447.8 1532.0 446.0C1536.9 444.2 1540.7 442.5 1545.0 441.0C1549.3 439.5 1555.7 437.7 1557.8 437.0" stroke="#f44336" stroke-width="2.6"/></g>
<rect x="1614" y="333" width="107" height="28" fill="#2f1b42" fill-opacity="0.92" stroke="#4caf50" stroke-width="2"/>
<rect x="1614" y="430.5" width="107" height="29" fill="#2f1b42" fill-opacity="0.92" stroke="#f44336" stroke-width="2"/>
<path d="M1615 349.5 H1720 M1615 443.5 H1720" stroke="#d9b13e" stroke-width="1" opacity="0.9"/>
<path d="M1662.9 387 V364 M1652.5 373.7 L1662.9 363.6 L1672.7 373.7" stroke="#4caf50" stroke-width="2" fill="none"/>
<path d="M1665.1 408 V428 M1655 418.8 L1665.1 428.2 L1674.9 418.8" stroke="#f44336" stroke-width="2" fill="none"/>
<rect x="196" y="101" width="345" height="24" fill="#171b27" fill-opacity="0.55"/>
<text x="71.0" y="119.5" font-size="16" fill="#d1d4dc" textLength="49.3" lengthAdjust="spacingAndGlyphs" stroke="#d1d4dc" stroke-width="0.22">Aus200</text>
<text x="124.5" y="119.5" font-size="16" fill="#787b86" stroke="#787b86" stroke-width="0.22">·</text>
<text x="133.8" y="119.5" font-size="16" fill="#d1d4dc" textLength="16.7" lengthAdjust="spacingAndGlyphs" stroke="#d1d4dc" stroke-width="0.22">1D</text>
<circle cx="174.9" cy="112.9" r="8.6" fill="#1d4645"/><circle cx="174.9" cy="112.9" r="4.3" fill="#36a895"/>
<text x="200.3" y="119.3" font-size="13" fill="#d1d4dc" textLength="8.0" lengthAdjust="spacingAndGlyphs" stroke="#d1d4dc" stroke-width="0.22">O</text>
<text x="210.3" y="119.3" font-size="13" fill="#26a69a" textLength="44.3" lengthAdjust="spacingAndGlyphs" stroke="#26a69a" stroke-width="0.22">7486.58</text>
<text x="261.7" y="119.3" font-size="13" fill="#d1d4dc" textLength="7.5" lengthAdjust="spacingAndGlyphs" stroke="#d1d4dc" stroke-width="0.22">H</text>
<text x="271.1" y="119.3" font-size="13" fill="#26a69a" textLength="45.0" lengthAdjust="spacingAndGlyphs" stroke="#26a69a" stroke-width="0.22">7515.58</text>
<text x="322.7" y="119.3" font-size="13" fill="#d1d4dc" textLength="6.2" lengthAdjust="spacingAndGlyphs" stroke="#d1d4dc" stroke-width="0.22">L</text>
<text x="330.4" y="119.3" font-size="13" fill="#26a69a" textLength="44.6" lengthAdjust="spacingAndGlyphs" stroke="#26a69a" stroke-width="0.22">7477.96</text>
<text x="381.6" y="119.3" font-size="13" fill="#d1d4dc" textLength="6.8" lengthAdjust="spacingAndGlyphs" stroke="#d1d4dc" stroke-width="0.22">C</text>
<text x="390.6" y="119.3" font-size="13" fill="#26a69a" textLength="44.6" lengthAdjust="spacingAndGlyphs" stroke="#26a69a" stroke-width="0.22">7499.46</text>
<text x="442.8" y="119.3" font-size="13" fill="#26a69a" textLength="91.2" lengthAdjust="spacingAndGlyphs" stroke="#26a69a" stroke-width="0.22">+12.88 (+0.17%)</text>
<rect x="70.7" y="129.7" width="61" height="37" rx="3" fill="#0f121d" stroke="#ef5350" stroke-width="1.3"/>
<text x="78.9" y="153.2" font-size="13" fill="#ef5350" textLength="44.3" lengthAdjust="spacingAndGlyphs" stroke="#ef5350" stroke-width="0.22">7499.46</text>
<rect x="181.4" y="129.7" width="61" height="37" rx="3" fill="#0f121d" stroke="#26a69a" stroke-width="1.3"/>
<text x="189.4" y="153.2" font-size="13" fill="#26a69a" textLength="45.0" lengthAdjust="spacingAndGlyphs" stroke="#26a69a" stroke-width="0.22">7500.74</text>
<text x="146.0" y="140.4" font-size="11.5" fill="#d1d4dc" textLength="20.1" lengthAdjust="spacingAndGlyphs" stroke="#d1d4dc" stroke-width="0.22">1.28</text>
<rect x="136" y="145.6" width="40.8" height="21" rx="3" fill="#1e222d"/>
<text x="143.6" y="160.2" font-size="13.5" fill="#d1d4dc" textLength="24.8" lengthAdjust="spacingAndGlyphs" stroke="#d1d4dc" stroke-width="0.22">0.25</text>
<text x="71.0" y="188.1" font-size="12.5" fill="#d1d4dc" textLength="25.0" lengthAdjust="spacingAndGlyphs" stroke="#d1d4dc" stroke-width="0.22">EMA</text>
<text x="99.3" y="188.1" font-size="12.5" fill="#8d919c" textLength="64.0" lengthAdjust="spacingAndGlyphs" stroke="#8d919c" stroke-width="0.22">200 close 0</text>
<text x="171.6" y="188.1" font-size="12.5" fill="#f4483a" textLength="45.2" lengthAdjust="spacingAndGlyphs" stroke="#f4483a" stroke-width="0.22">7191.56</text>
<text x="71.0" y="212.0" font-size="12.5" fill="#d1d4dc" textLength="25.0" lengthAdjust="spacingAndGlyphs" stroke="#d1d4dc" stroke-width="0.22">EMA</text>
<text x="99.3" y="212.0" font-size="12.5" fill="#8d919c" textLength="64.0" lengthAdjust="spacingAndGlyphs" stroke="#8d919c" stroke-width="0.22">200 close 0</text>
<text x="171.6" y="212.0" font-size="12.5" fill="#f4483a" textLength="45.2" lengthAdjust="spacingAndGlyphs" stroke="#f4483a" stroke-width="0.22">7191.56</text>
<text x="71.0" y="236.0" font-size="12.5" fill="#d1d4dc" textLength="25.0" lengthAdjust="spacingAndGlyphs" stroke="#d1d4dc" stroke-width="0.22">EMA</text>
<text x="99.3" y="236.0" font-size="12.5" fill="#8d919c" textLength="64.0" lengthAdjust="spacingAndGlyphs" stroke="#8d919c" stroke-width="0.22">100 close 0</text>
<text x="171.6" y="236.0" font-size="12.5" fill="#3a9cf2" textLength="45.2" lengthAdjust="spacingAndGlyphs" stroke="#3a9cf2" stroke-width="0.22">7231.49</text>
<text x="71.0" y="260.0" font-size="12.5" fill="#d1d4dc" textLength="25.0" lengthAdjust="spacingAndGlyphs" stroke="#d1d4dc" stroke-width="0.22">EMA</text>
<text x="99.3" y="260.0" font-size="12.5" fill="#8d919c" textLength="64.0" lengthAdjust="spacingAndGlyphs" stroke="#8d919c" stroke-width="0.22">200 close 0</text>
<text x="171.6" y="260.0" font-size="12.5" fill="#f4483a" textLength="45.2" lengthAdjust="spacingAndGlyphs" stroke="#f4483a" stroke-width="0.22">7191.56</text>
<text x="71.0" y="284.0" font-size="12.5" fill="#d1d4dc" textLength="25.0" lengthAdjust="spacingAndGlyphs" stroke="#d1d4dc" stroke-width="0.22">EMA</text>
<text x="99.3" y="284.0" font-size="12.5" fill="#8d919c" textLength="57.0" lengthAdjust="spacingAndGlyphs" stroke="#8d919c" stroke-width="0.22">50 close 0</text>
<text x="164.9" y="284.0" font-size="12.5" fill="#aa1ef0" textLength="44.2" lengthAdjust="spacingAndGlyphs" stroke="#aa1ef0" stroke-width="0.22">7314.91</text>
<rect x="71.8" y="293.5" width="27.5" height="20" rx="3" fill="none" stroke="#363a45" stroke-width="1"/>
<path d="M81.5 305.5 L85.5 301.5 L89.5 305.5" stroke="#d1d4dc" stroke-width="1.4" fill="none"/>
<path d="M1846.5 97 V924" stroke="#2e3240" stroke-width="1"/>
<text x="1856.4" y="681.1" font-size="12" fill="#b2b5be" textLength="41.3" lengthAdjust="spacingAndGlyphs" stroke="none">6000.00</text>
<text x="1856.4" y="640.9" font-size="12" fill="#b2b5be" textLength="41.3" lengthAdjust="spacingAndGlyphs" stroke="none">6200.00</text>
<text x="1856.4" y="600.8" font-size="12" fill="#b2b5be" textLength="41.3" lengthAdjust="spacingAndGlyphs" stroke="none">6400.00</text>
<text x="1856.4" y="560.6" font-size="12" fill="#b2b5be" textLength="41.3" lengthAdjust="spacingAndGlyphs" stroke="none">6600.00</text>
<text x="1856.4" y="520.5" font-size="12" fill="#b2b5be" textLength="41.3" lengthAdjust="spacingAndGlyphs" stroke="none">6800.00</text>
<text x="1856.4" y="480.4" font-size="12" fill="#b2b5be" textLength="41.3" lengthAdjust="spacingAndGlyphs" stroke="none">7000.00</text>
<text x="1856.4" y="440.2" font-size="12" fill="#b2b5be" textLength="41.3" lengthAdjust="spacingAndGlyphs" stroke="none">7200.00</text>
<text x="1856.4" y="400.1" font-size="12" fill="#b2b5be" textLength="41.3" lengthAdjust="spacingAndGlyphs" stroke="none">7400.00</text>
<text x="1856.4" y="359.9" font-size="12" fill="#b2b5be" textLength="41.3" lengthAdjust="spacingAndGlyphs" stroke="none">7600.00</text>
<text x="1856.4" y="319.8" font-size="12" fill="#b2b5be" textLength="41.3" lengthAdjust="spacingAndGlyphs" stroke="none">7800.00</text>
<text x="1856.4" y="279.7" font-size="12" fill="#b2b5be" textLength="41.3" lengthAdjust="spacingAndGlyphs" stroke="none">8000.00</text>
<text x="1856.4" y="239.5" font-size="12" fill="#b2b5be" textLength="41.3" lengthAdjust="spacingAndGlyphs" stroke="none">8200.00</text>
<text x="1856.4" y="199.4" font-size="12" fill="#b2b5be" textLength="41.3" lengthAdjust="spacingAndGlyphs" stroke="none">8400.00</text>
<text x="1856.4" y="159.2" font-size="12" fill="#b2b5be" textLength="41.3" lengthAdjust="spacingAndGlyphs" stroke="none">8600.00</text>
<text x="1856.4" y="119.1" font-size="12" fill="#b2b5be" textLength="41.3" lengthAdjust="spacingAndGlyphs" stroke="none">8800.00</text>
<path d="M1846 189.0 h56.5 a2 2 0 0 1 2 2 v13 a2 2 0 0 1 -2 2 h-56.5z" fill="#fbe434"/>
<path d="M1846 197.5 h4" stroke="#131722" stroke-width="1"/>
<text x="1856.4" y="201.7" font-size="12" fill="#10131c" textLength="41.3" lengthAdjust="spacingAndGlyphs" stroke="#10131c" stroke-width="0.3">8387.87</text>
<path d="M1846 247.0 h56.5 a2 2 0 0 1 2 2 v13 a2 2 0 0 1 -2 2 h-56.5z" fill="#fbe434"/>
<path d="M1846 255.5 h4" stroke="#131722" stroke-width="1"/>
<text x="1856.4" y="259.7" font-size="12" fill="#10131c" textLength="41.3" lengthAdjust="spacingAndGlyphs" stroke="#10131c" stroke-width="0.3">8099.52</text>
<path d="M1846 283.0 h56.5 a2 2 0 0 1 2 2 v13 a2 2 0 0 1 -2 2 h-56.5z" fill="#fbe434"/>
<path d="M1846 291.5 h4" stroke="#131722" stroke-width="1"/>
<text x="1856.4" y="295.7" font-size="12" fill="#10131c" textLength="41.3" lengthAdjust="spacingAndGlyphs" stroke="#10131c" stroke-width="0.3">7921.14</text>
<path d="M1846 341.0 h56.5 a2 2 0 0 1 2 2 v13 a2 2 0 0 1 -2 2 h-56.5z" fill="#fbe434"/>
<path d="M1846 349.5 h4" stroke="#131722" stroke-width="1"/>
<text x="1856.4" y="353.7" font-size="12" fill="#10131c" textLength="41.3" lengthAdjust="spacingAndGlyphs" stroke="#10131c" stroke-width="0.3">7632.80</text>
<path d="M1846 399.0 h56.5 a2 2 0 0 1 2 2 v13 a2 2 0 0 1 -2 2 h-56.5z" fill="#fbe434"/>
<path d="M1846 407.5 h4" stroke="#131722" stroke-width="1"/>
<text x="1856.4" y="411.7" font-size="12" fill="#10131c" textLength="41.3" lengthAdjust="spacingAndGlyphs" stroke="#10131c" stroke-width="0.3">7344.46</text>
<path d="M1846 435.0 h56.5 a2 2 0 0 1 2 2 v13 a2 2 0 0 1 -2 2 h-56.5z" fill="#fbe434"/>
<path d="M1846 443.5 h4" stroke="#131722" stroke-width="1"/>
<text x="1856.4" y="447.7" font-size="12" fill="#10131c" textLength="41.3" lengthAdjust="spacingAndGlyphs" stroke="#10131c" stroke-width="0.3">7166.08</text>
<path d="M1846 463.0 h56.5 a2 2 0 0 1 2 2 v13 a2 2 0 0 1 -2 2 h-56.5z" fill="#fbe434"/>
<path d="M1846 471.5 h4" stroke="#131722" stroke-width="1"/>
<text x="1856.4" y="475.7" font-size="12" fill="#10131c" textLength="41.3" lengthAdjust="spacingAndGlyphs" stroke="#10131c" stroke-width="0.3">7021.91</text>
<path d="M1846 492.0 h56.5 a2 2 0 0 1 2 2 v13 a2 2 0 0 1 -2 2 h-56.5z" fill="#fbe434"/>
<path d="M1846 500.5 h4" stroke="#131722" stroke-width="1"/>
<text x="1856.4" y="504.7" font-size="12" fill="#10131c" textLength="41.3" lengthAdjust="spacingAndGlyphs" stroke="#10131c" stroke-width="0.3">6877.73</text>
<path d="M1846 528.0 h56.5 a2 2 0 0 1 2 2 v13 a2 2 0 0 1 -2 2 h-56.5z" fill="#fbe434"/>
<path d="M1846 536.5 h4" stroke="#131722" stroke-width="1"/>
<text x="1856.4" y="540.7" font-size="12" fill="#10131c" textLength="41.3" lengthAdjust="spacingAndGlyphs" stroke="#10131c" stroke-width="0.3">6699.35</text>
<path d="M1846 586.0 h56.5 a2 2 0 0 1 2 2 v13 a2 2 0 0 1 -2 2 h-56.5z" fill="#fbe434"/>
<path d="M1846 594.5 h4" stroke="#131722" stroke-width="1"/>
<text x="1856.4" y="598.7" font-size="12" fill="#10131c" textLength="41.3" lengthAdjust="spacingAndGlyphs" stroke="#10131c" stroke-width="0.3">6411.01</text>
<path d="M1846 368.0 h56.5 a2 2 0 0 1 2 2 v13 a2 2 0 0 1 -2 2 h-56.5z" fill="#26a69a"/>
<path d="M1846 376.5 h4" stroke="#ffffff" stroke-width="1"/>
<text x="1856.4" y="380.8" font-size="12" fill="#ffffff" textLength="41.3" lengthAdjust="spacingAndGlyphs" stroke="#ffffff" stroke-width="0.22">7499.46</text>
<path d="M62 681.5 H1910" stroke="#2e3240" stroke-width="1"/>
<rect x="62" y="733.5" width="1784" height="134.0" fill="#7e57c2" fill-opacity="0.085"/>
<path d="M62 733.5 H1846" stroke="#4caf50" stroke-width="1" stroke-dasharray="6 4"/>
<path d="M62 867.5 H1846" stroke="#f44336" stroke-width="1" stroke-dasharray="6 4"/>
<g clip-path="url(#cr)"><path d="M62.2 786.8L63.9 792.3L65.4 843.4L68.7 833.6L70.4 865.2L74.1 820.1L77.0 840.2L80.7 845.0L82.9 845.6L85.0 852.1L87.4 865.8L90.5 832.5L92.2 836.2L94.8 809.7L97.4 796.6L99.2 795.5L101.3 801.0L103.5 774.9L105.7 773.8L107.4 764.0L110.5 760.1L113.3 761.8L115.5 765.1L117.0 763.6L119.8 766.2L123.1 755.3L125.3 753.1L127.5 736.8L129.6 748.8L132.5 756.4L136.2 736.8L138.3 752.0L141.0 744.4L144.9 722.6L147.5 730.3L149.2 717.2L152.5 731.3L154.7 730.9L156.4 721.6L159.0 729.2L161.2 777.1L162.7 803.2L165.5 783.6L168.2 773.8L171.0 767.3L173.6 759.6L176.9 762.9L178.6 798.8L181.4 781.4L184.0 768.3L187.3 779.2L191.2 764.0L193.2 779.2L196.5 762.9L198.8 785.8L201.5 777.1L204.1 771.0L208.0 786.8L210.2 755.3L212.3 746.1L213.9 746.6L215.6 759.2L218.9 759.2L220.6 747.0L222.8 746.1L223.7 787.9L224.7 838.0L227.6 861.9L230.2 898.9L234.1 898.9L235.2 879.3L237.4 855.4L240.2 846.7L242.8 857.1L245.0 857.1L246.7 845.0L248.2 843.4L251.5 833.6L253.7 811.9L255.2 795.5L257.0 805.3L259.1 800.6L262.0 802.1L264.1 790.8L265.9 801.0L268.5 792.7L271.1 794.0L273.7 801.4L277.2 785.3L279.8 786.8L282.4 792.3L285.2 808.6L287.4 812.3L290.3 800.6L293.5 818.0L295.0 785.8L297.2 779.7L300.5 778.8L303.3 764.0L305.9 750.9L308.1 745.5L311.4 741.8L315.7 739.6L317.9 742.2L319.4 754.9L321.2 739.6L323.3 746.6L326.6 740.1L328.3 771.6L329.9 750.5L333.1 756.4L334.6 757.5L337.5 776.0L341.2 766.2L343.4 774.9L346.2 762.9L348.4 761.8L350.5 746.6L352.7 739.6L354.9 739.0L357.7 746.1L359.9 741.1L362.1 754.9L364.7 749.8L366.9 733.5L369.0 725.9L372.3 719.4L374.5 733.5L376.6 735.3L379.5 742.7L382.1 732.4L385.4 729.2L387.5 707.4L390.4 746.1L394.1 740.5L396.2 764.0L398.4 765.7L401.7 777.1L403.4 805.3L405.6 785.8L409.3 772.7L412.1 787.9L414.3 771.0L416.5 773.8L419.1 787.9L423.0 807.5L425.6 790.5L427.4 797.1L429.5 779.2L433.2 776.0L436.1 781.4L440.4 845.0L443.5 809.3L445.6 809.3L447.8 820.1L450.6 820.6L452.8 829.3L455.6 829.3L457.2 814.5L458.7 830.4L460.0 818.4L462.6 828.2L465.4 803.2L467.6 812.3L469.8 809.3L472.0 811.4L474.1 824.9L477.0 831.5L480.0 805.3L482.9 812.3L485.7 809.3L487.9 807.5L489.4 802.1L491.6 772.7L493.7 777.1L495.9 763.6L498.1 766.6L502.4 764.0L504.6 768.8L507.4 759.2L510.1 752.7L513.3 751.4L515.5 738.3L518.3 736.8L520.5 754.9L524.2 741.1L526.4 767.3L529.2 771.6L533.6 761.4L535.1 774.9L537.3 781.8L541.0 766.2L544.2 744.8L546.6 749.2L549.7 745.5L551.4 803.2L553.1 847.8L555.1 820.6L557.9 810.8L560.5 813.0L562.7 817.3L564.9 810.8L568.4 818.8L570.6 840.2L573.2 865.2L575.3 862.4L577.5 863.0L579.7 876.7L582.3 827.5L584.5 827.1L586.2 811.9L588.4 832.5L590.6 833.2L593.2 819.5L595.4 808.6L597.5 815.1L601.0 805.3L603.6 786.8L606.2 784.0L609.1 805.3L610.6 807.1L613.4 792.3L615.6 801.0L617.8 801.0L621.0 820.6L624.3 842.3L626.5 864.1L628.7 884.8L632.6 885.9L634.5 898.9L638.0 898.9L640.2 875.0L641.7 863.4L644.3 868.9L647.6 868.0L648.9 840.2L650.9 824.9L653.7 825.4L655.4 827.1L657.4 846.3L659.6 828.2L661.3 829.3L663.5 839.7L666.3 820.6L668.5 809.3L670.4 809.7L672.8 825.4L675.0 827.5L676.5 825.4L679.4 831.0L681.5 812.3L683.7 809.7L685.7 794.0L688.1 790.5L690.3 778.8L692.4 778.1L694.4 773.1L696.6 785.3L698.7 768.8L701.6 746.6L703.3 737.4L705.5 746.6L710.3 741.1L712.9 746.6L715.7 743.3L718.5 753.1L721.2 739.6L723.3 743.3L726.6 734.6L729.4 727.0L732.0 733.1L734.6 729.2L736.4 757.5L738.6 792.3L740.7 802.7L742.9 786.8L745.5 771.0L747.7 794.5L751.2 807.5L753.8 819.5L756.0 838.4L758.2 844.5L760.3 831.9L762.9 842.3L765.8 853.2L769.0 789.0L771.6 781.0L774.5 818.4L776.6 821.7L779.9 842.3L782.5 830.4L785.4 838.0L787.5 853.7L789.7 857.1L791.2 876.1L796.9 877.6L798.8 847.1L802.8 861.9L804.9 831.5L807.6 784.7L809.3 790.5L811.5 792.3L813.6 805.3L815.8 808.6L818.7 819.5L820.2 818.8L822.4 792.3L823.9 808.6L829.3 781.4L831.1 792.3L833.2 802.1L835.4 788.4L838.7 784.0L841.3 776.6L843.0 777.1L844.5 784.7L846.3 769.4L849.6 775.3L851.7 773.1L853.5 752.7L855.6 776.0L857.8 787.9L860.0 762.9L862.2 773.8L866.1 764.0L868.3 778.1L870.9 753.1L873.5 737.9L875.2 741.1L877.4 760.7L879.6 757.5L882.4 764.0L886.6 752.0L889.4 754.2L891.6 757.0L893.7 743.3L897.0 741.8L899.2 741.1L902.4 749.2L904.6 745.5L906.4 726.6L909.0 731.3L911.1 739.0L914.0 743.3L916.1 757.5L918.3 776.0L920.5 785.3L924.2 799.9L927.9 781.4L930.1 781.0L932.3 796.6L935.1 820.6L937.3 821.7L939.4 819.5L943.4 838.0L946.4 798.8L948.1 824.9L949.9 818.4L952.5 838.0L954.0 827.1L955.8 829.3L959.7 843.9L961.2 815.1L963.4 818.4L966.2 784.0L968.4 792.3L970.3 787.9L972.7 759.6L975.3 747.7L978.6 740.1L981.4 734.6L983.6 749.2L986.2 733.1L988.8 727.4L992.8 726.6L996.7 722.2L999.3 724.4L1001.5 739.0L1003.6 728.1L1005.4 730.3L1008.0 725.9L1010.6 717.9L1012.3 724.8L1014.5 742.2L1016.3 747.0L1020.0 771.6L1023.2 800.6L1025.4 796.6L1027.6 781.8L1029.7 794.5L1032.4 817.3L1034.1 818.0L1036.7 833.6L1038.5 830.4L1040.6 838.0L1043.9 853.2L1047.2 851.0L1049.3 857.6L1052.2 868.9L1054.8 851.0L1056.5 858.7L1059.1 842.3L1060.7 833.6L1063.5 797.1L1065.7 801.0L1067.8 807.5L1069.6 810.8L1071.5 797.7L1074.4 842.3L1076.5 870.6L1078.3 852.1L1080.5 875.0L1082.4 858.0L1085.2 878.2L1087.4 860.8L1089.6 873.9L1091.8 859.7L1093.9 848.9L1096.6 832.5L1098.7 843.4L1100.5 850.6L1103.3 842.3L1105.5 841.9L1107.0 828.2L1109.2 826.0L1111.4 803.2L1113.5 783.6L1115.7 773.8L1117.9 768.8L1121.2 767.3L1122.9 765.7L1124.4 768.3L1127.2 743.3L1130.9 742.2L1133.6 736.8L1135.3 741.8L1140.7 744.0L1142.5 759.6L1144.7 762.3L1146.8 755.3L1149.0 770.5L1151.6 780.3L1155.3 757.0L1157.1 772.7L1159.2 798.8L1162.1 833.6L1164.2 835.4L1166.2 791.8L1168.6 794.5L1171.2 804.3L1173.4 805.3L1175.6 807.5L1177.7 796.6L1180.3 793.4L1182.5 820.1L1184.3 804.3L1187.5 794.5L1190.4 791.8L1191.9 792.3L1194.1 811.9L1197.3 840.2L1199.1 804.3L1201.7 807.5L1203.9 816.2L1206.7 845.6L1210.4 799.9L1212.6 807.5L1215.2 815.8L1217.3 827.5L1219.5 821.7L1221.7 831.5L1223.9 820.6L1226.7 800.6L1228.9 798.8L1231.1 792.3L1233.2 774.9L1235.4 762.9L1237.6 755.7L1239.8 768.3L1241.9 808.6L1244.5 831.5L1246.9 829.3L1250.6 801.4L1252.8 798.4L1256.1 791.2L1258.3 780.3L1260.0 779.2L1261.7 805.3L1263.3 833.6L1265.4 835.8L1268.7 839.1L1270.9 806.4L1274.1 773.8L1277.4 769.4L1279.6 776.6L1281.3 767.3L1283.5 765.7L1285.7 766.6L1288.3 762.9L1292.2 759.2L1294.4 746.1L1297.0 742.7L1301.3 740.1L1303.5 753.1L1305.3 803.2L1308.3 802.1L1312.2 788.4L1314.0 798.8L1316.1 786.2L1319.2 786.2L1321.4 796.6L1324.2 809.7L1327.5 850.0L1330.1 861.5L1334.4 855.4L1336.2 861.5L1338.3 827.5L1341.2 852.1L1344.9 811.9L1348.1 783.6L1349.7 777.5L1352.5 790.1L1354.7 780.3L1356.8 779.7L1359.0 784.7L1360.5 809.3L1362.7 819.5L1365.5 828.8L1367.7 811.9L1369.9 815.1L1371.4 827.1L1374.3 786.2L1378.6 807.5L1383.0 821.7L1385.1 860.2L1387.3 840.2L1389.5 828.8L1391.7 840.6L1394.5 838.0L1396.7 825.4L1399.3 842.3L1402.5 858.7L1405.4 854.3L1408.0 845.6L1409.7 819.5L1411.3 820.6L1413.4 800.6L1416.3 791.8L1418.4 805.3L1420.6 815.8L1422.1 798.4L1424.7 797.7L1427.1 813.0L1429.3 831.5L1431.3 854.3L1435.2 835.8L1438.9 847.1L1442.4 857.6L1444.5 841.9L1447.6 840.2L1449.3 816.2L1451.1 790.5L1453.3 788.4L1455.9 791.8L1458.0 790.5L1460.2 781.0L1462.8 785.3L1465.7 783.6L1467.8 768.3L1469.4 758.6L1471.1 756.4L1473.3 778.1L1475.5 770.5L1477.6 769.4L1480.2 772.3L1482.4 782.5L1484.2 785.3L1486.3 778.1L1488.5 805.8L1491.1 791.8L1495.5 779.7L1497.6 756.4L1499.4 776.0L1502.2 776.6L1503.7 752.7L1506.4 761.4L1508.1 748.8L1511.4 744.8L1513.5 740.1L1515.7 718.3L1517.5 705.7L1519.6 723.7L1521.2 721.6L1524.4 703.5L1526.6 715.0L1529.9 720.5L1532.0 712.9L1533.8 707.0L1536.4 706.3L1538.1 709.6L1539.7 724.8L1541.4 752.0L1544.0 754.2L1546.2 760.1L1548.4 750.9L1550.5 756.4L1552.7 758.6L1555.5 770.1L1558.2 765.1" stroke="#fbe23c" stroke-width="1.9" fill="none" stroke-linejoin="round"/></g>
<text x="71.7" y="702.5" font-size="12" fill="#d1d4dc" textLength="15.4" lengthAdjust="spacingAndGlyphs" stroke="#d1d4dc" stroke-width="0.22">RSI</text>
<text x="93.3" y="702.5" font-size="12" fill="#8d919c" textLength="12.3" lengthAdjust="spacingAndGlyphs" stroke="#8d919c" stroke-width="0.22">14</text>
<text x="114.3" y="702.5" font-size="12" fill="#fbe23c" textLength="31.0" lengthAdjust="spacingAndGlyphs" stroke="#fbe23c" stroke-width="0.22">60.46</text>
<text x="1856.4" y="871.8" font-size="12" fill="#b2b5be" textLength="29.0" lengthAdjust="spacingAndGlyphs" stroke="none">30.00</text>
<text x="1856.4" y="838.4" font-size="12" fill="#b2b5be" textLength="29.0" lengthAdjust="spacingAndGlyphs" stroke="none">40.00</text>
<text x="1856.4" y="805.0" font-size="12" fill="#b2b5be" textLength="29.0" lengthAdjust="spacingAndGlyphs" stroke="none">50.00</text>
<text x="1856.4" y="771.5" font-size="12" fill="#b2b5be" textLength="29.0" lengthAdjust="spacingAndGlyphs" stroke="none">60.00</text>
<text x="1856.4" y="738.1" font-size="12" fill="#b2b5be" textLength="29.0" lengthAdjust="spacingAndGlyphs" stroke="none">70.00</text>
<text x="1856.4" y="704.7" font-size="12" fill="#b2b5be" textLength="29.0" lengthAdjust="spacingAndGlyphs" stroke="none">80.00</text>
<path d="M62 896.5 H1910 M62 924.5 H1910" stroke="#2e3240" stroke-width="1"/>
<text x="92.2" y="914.8" font-size="12" fill="#d1d4dc" text-anchor="middle" textLength="27.2" lengthAdjust="spacingAndGlyphs" font-weight="bold" stroke="none">2019</text>
<text x="207.2" y="914.8" font-size="12" fill="#d1d4dc" text-anchor="middle" textLength="27.2" lengthAdjust="spacingAndGlyphs" font-weight="bold" stroke="none">2020</text>
<text x="319.2" y="914.8" font-size="12" fill="#d1d4dc" text-anchor="middle" textLength="27.2" lengthAdjust="spacingAndGlyphs" font-weight="bold" stroke="none">2021</text>
<text x="434.2" y="914.8" font-size="12" fill="#d1d4dc" text-anchor="middle" textLength="27.2" lengthAdjust="spacingAndGlyphs" font-weight="bold" stroke="none">2022</text>
<text x="522.2" y="914.8" font-size="12" fill="#b2b5be" text-anchor="middle" textLength="18.3" lengthAdjust="spacingAndGlyphs" stroke="none">Apr</text>
<text x="610.2" y="914.8" font-size="12" fill="#b2b5be" text-anchor="middle" textLength="18.5" lengthAdjust="spacingAndGlyphs" stroke="none">Jun</text>
<text x="705.2" y="914.8" font-size="12" fill="#b2b5be" text-anchor="middle" textLength="18.8" lengthAdjust="spacingAndGlyphs" stroke="none">Aug</text>
<text x="804.2" y="914.8" font-size="12" fill="#b2b5be" text-anchor="middle" textLength="18.3" lengthAdjust="spacingAndGlyphs" stroke="none">Oct</text>
<text x="959.2" y="914.8" font-size="12" fill="#d1d4dc" text-anchor="middle" textLength="27.2" lengthAdjust="spacingAndGlyphs" font-weight="bold" stroke="none">2023</text>
<text x="1058.2" y="914.8" font-size="12" fill="#b2b5be" text-anchor="middle" textLength="18.8" lengthAdjust="spacingAndGlyphs" stroke="none">Mar</text>
<text x="1157.2" y="914.8" font-size="12" fill="#b2b5be" text-anchor="middle" textLength="20.3" lengthAdjust="spacingAndGlyphs" stroke="none">May</text>
<text x="1257.2" y="914.8" font-size="12" fill="#b2b5be" text-anchor="middle" textLength="14.9" lengthAdjust="spacingAndGlyphs" stroke="none">Jul</text>
<text x="1354.2" y="914.8" font-size="12" fill="#b2b5be" text-anchor="middle" textLength="18.0" lengthAdjust="spacingAndGlyphs" stroke="none">Sep</text>
<text x="1449.2" y="914.8" font-size="12" fill="#b2b5be" text-anchor="middle" textLength="18.9" lengthAdjust="spacingAndGlyphs" stroke="none">Nov</text>
<text x="1539.2" y="914.8" font-size="12" fill="#d1d4dc" text-anchor="middle" textLength="27.2" lengthAdjust="spacingAndGlyphs" font-weight="bold" stroke="none">2024</text>
<text x="1636.2" y="914.8" font-size="12" fill="#b2b5be" text-anchor="middle" textLength="18.8" lengthAdjust="spacingAndGlyphs" stroke="none">Mar</text>
<text x="1731.2" y="914.8" font-size="12" fill="#b2b5be" text-anchor="middle" textLength="20.3" lengthAdjust="spacingAndGlyphs" stroke="none">May</text>
<text x="1826.2" y="914.8" font-size="12" fill="#b2b5be" text-anchor="middle" textLength="14.9" lengthAdjust="spacingAndGlyphs" stroke="none">Jul</text>
<rect x="0" y="0" width="1913" height="58.5" fill="#202632"/>
<path d="M0 58.5 H1913" stroke="#2a303c" stroke-width="1"/>
<path d="M14 21.9 H34.2 M14 27 H34.2 M14 32.05 H34.2" stroke="#ffffff" stroke-width="2"/>
<text x="106.3" y="39.5" font-size="32.8" fill="url(#lg)" textLength="143.3" lengthAdjust="spacingAndGlyphs" stroke="#202632" stroke-width="0.8" paint-order="fill stroke">ActivTrader</text>
<text x="250.8" y="21.4" font-size="8" fill="#c8d0dc" textLength="8.5" lengthAdjust="spacingAndGlyphs">™</text>
<rect x="382.5" y="4.5" width="160" height="42" rx="5" fill="none" stroke="#6a7685" stroke-width="1"/>
<text x="414.0" y="32.0" font-size="17" fill="#e4e7ee" stroke="none">+</text>
<text x="434.7" y="32.2" font-size="15.5" fill="#e4e7ee" textLength="77.0" lengthAdjust="spacingAndGlyphs" stroke="none">New Order</text>
<text x="1403.2" y="24.6" font-size="15" fill="#e6e9f0" textLength="84.7" lengthAdjust="spacingAndGlyphs" stroke="none">10 000.00 €</text>
<text x="1402.9" y="42.0" font-size="12.5" fill="#b4bac6" textLength="42.8" lengthAdjust="spacingAndGlyphs" stroke="none">Balance</text>
<text x="1523.2" y="24.6" font-size="15" fill="#e6e9f0" textLength="84.7" lengthAdjust="spacingAndGlyphs" stroke="none">10 000.00 €</text>
<text x="1522.9" y="42.0" font-size="12.5" fill="#b4bac6" textLength="34.6" lengthAdjust="spacingAndGlyphs" stroke="none">Equity</text>
<text x="1643.0" y="24.6" font-size="15" fill="#e6e9f0" textLength="44.1" lengthAdjust="spacingAndGlyphs" stroke="none">0.00 €</text>
<text x="1642.7" y="42.0" font-size="12.5" fill="#b4bac6" textLength="29.0" lengthAdjust="spacingAndGlyphs" stroke="none">Swap</text>
<text x="1721.9" y="24.6" font-size="15" fill="#e6e9f0" textLength="44.4" lengthAdjust="spacingAndGlyphs" stroke="none">0.00 €</text>
<text x="1721.6" y="42.0" font-size="12.5" fill="#b4bac6" textLength="30.0" lengthAdjust="spacingAndGlyphs" stroke="none">Profit</text>
<path d="M1772 41 h8.2 l-4.1 4.8z" fill="#d6dae2"/>
<path d="M1899 41 h8 l-4 4.8z" fill="#d6dae2"/>
<rect x="1808" y="24.5" width="20" height="13.5" rx="1" fill="none" stroke="#9a968f" stroke-width="1.8"/>
<path d="M1808.5 25.5 L1818 32 L1827.5 25.5" fill="none" stroke="#9a968f" stroke-width="1.8"/>
<circle cx="1830.6" cy="22.7" r="8.4" fill="#ffffff"/>
<text x="1830.6" y="26.6" font-size="11" fill="#202632" text-anchor="middle" font-weight="bold" stroke="#202632" stroke-width="0.22">3</text>
<circle cx="1880.8" cy="29.1" r="14" fill="#10141d"/>
<clipPath id="av"><circle cx="1880.8" cy="29.1" r="14"/></clipPath>
<g clip-path="url(#av)"><circle cx="1880.8" cy="25.2" r="5.6" fill="#98a1ac"/><ellipse cx="1880.8" cy="39.5" rx="10.3" ry="6.6" fill="#98a1ac"/></g>
<path d="M7.5 59 V962 M61.5 59 V962" stroke="#2e3240" stroke-width="1"/>
<path d="M8 358.5 H61 M8 443.5 H61 M8 600.5 H61" stroke="#2e3240" stroke-width="1"/>
<path d="M-0.5 514 L5 521.3 L-0.5 528.6" stroke="#4a9cf0" stroke-width="1.8" fill="none"/>
<path d="M34.5 71 V78.6 M34.5 86.2 V94 M23 82.5 H30.8 M38 82.5 H46" stroke="#2f86ea" stroke-width="1.2" fill="none"/>
<g fill="none" stroke="#9a9da8" stroke-width="1.1">
<circle cx="42.5" cy="109.5" r="2.1"/><circle cx="25.5" cy="126.5" r="2.1"/><path d="M27 125 L41 111"/>
<circle cx="25.5" cy="151.5" r="2.1"/><circle cx="25.5" cy="162.6" r="2.1"/><circle cx="36.4" cy="162.6" r="2.1"/>
<path d="M27 150 L33.8 143.3 M27 161.1 L39.8 148.3 M37.9 161.1 L44.8 154.2 M27 153 L34.9 161.1"/>
<path d="M22.3 198.8 L28.5 189.5 C31 186.3 36 187 37.3 190.5 C38.5 194.5 34.5 198.8 29 198.8 Z M37 184 C36.3 187.5 39.5 189.8 41.5 187.8 L47.5 182.2"/>
<path d="M28 221.5 V217.8 H41 V221.5 M34.5 217.8 V234.8 M31.7 234.8 H37.3"/>
<circle cx="28.4" cy="253.0" r="2.1"/><circle cx="40.7" cy="254.3" r="2.1"/><circle cx="32.6" cy="260.5" r="2.1"/><circle cx="25.5" cy="270.5" r="2.1"/><circle cx="43.5" cy="267.6" r="2.1"/>
<path d="M28.9 255.1 L31.9 258.5 M26.3 268.5 L28 255.1 M26.7 268.8 L31.6 262.3 M34.3 259.3 L39.2 255.6 M34.5 261.5 L41.7 266.5 M41.1 256.4 L43.1 265.5"/>
<circle cx="24.5" cy="290.6" r="2.1"/><circle cx="24.5" cy="300.3" r="2.1"/><circle cx="42.5" cy="300.3" r="2.1"/><circle cx="24.5" cy="306.4" r="2.1"/>
<path d="M26.6 290.6 H44 M26.6 300.3 H40.4 M26.6 306.4 H44"/>
<path d="M29 298 L42 292" stroke-dasharray="1 2.2"/>
<circle cx="33" cy="334.1" r="7.8"/><path d="M28.8 336.3 C30.3 339.8 35.7 339.8 37.2 336.3"/>
<circle cx="30.2" cy="331.5" r="0.9" fill="#9a9da8" stroke="none"/><circle cx="35.8" cy="331.5" r="0.9" fill="#9a9da8" stroke="none"/>
<g transform="translate(34 383.2) rotate(-45)"><rect x="-11.5" y="-3.6" width="23" height="7.2" rx="0.8"/><path d="M-8 -3.6 v2.6 M-4.8 -3.6 v2.6 M-1.6 -3.6 v2.6 M1.6 -3.6 v2.6 M4.8 -3.6 v2.6 M8 -3.6 v2.6"/></g>
<circle cx="32.6" cy="417.8" r="8.4"/><path d="M38.6 423.8 L42 427.2 M28.8 417.8 H36.4 M32.6 414 V421.6"/>
<path d="M26.3 476.5 V466 a7.7 7.7 0 0 1 15.4 0 V476.5 H37.3 V466 a3.3 3.3 0 0 0 -6.6 0 V476.5 Z M26.3 472.8 H30.7 M37.3 472.8 H41.7"/>
<g transform="translate(31.2 500.5) rotate(-45)"><path d="M-9 -2.8 H8 V2.8 H-9 L-12.5 0 Z M5.3 -2.8 V2.8"/></g>
<rect x="35.5" y="507.5" width="8" height="6" rx="0.8"/><path d="M37.3 507.5 v-2.2 a2.3 2.3 0 0 1 4.4 -0.9"/><path d="M39.5 509.5 v1.8"/>
<rect x="26.3" y="538.3" width="15.6" height="11.3" rx="1.8"/><path d="M29.3 538.3 v-3.3 a4.4 4.4 0 0 1 8.3 -1.9"/><path d="M34 542.8 v2.6" stroke-width="1.6"/>
<path d="M24 572 C27.5 563.2 38.5 563.2 42.5 572 C38.5 580.8 27.5 580.8 24 572 Z"/><circle cx="33" cy="572" r="3.6"/>
<path d="M34.5 586.3 L37.5 582.3 C38.7 581 40.6 581.8 40.4 583.4 C40.2 585.2 38.5 586.3 36.5 586.3 Z M40.6 581 L44.8 578.2" stroke-width="0.9"/>
<path d="M25.3 619.6 H42.7 M30.7 619.6 V616.8 H37.3 V619.6 M27.3 619.6 V633 a1.3 1.3 0 0 0 1.3 1.3 H39.4 a1.3 1.3 0 0 0 1.3 -1.3 V619.6 M31.5 623 V631 M36.5 623 V631"/>
</g>
<path d="M62 96.5 H1910" stroke="#2e3240" stroke-width="1"/>
<path d="M162.5 59 V96 M200.5 59 V96 M239.5 59 V96 M341.5 59 V96 M449.5 59 V96 M512.5 59 V96 M1702.5 59 V96 M1741.5 59 V96 M1832.5 59 V96 M1871.5 59 V96" stroke="#2e3240" stroke-width="1"/>
<text x="71.0" y="81.7" font-size="13.5" fill="#9ca1ae" textLength="49.3" lengthAdjust="spacingAndGlyphs" font-weight="bold" stroke="none">AUS200</text>
<text x="177.6" y="81.7" font-size="13.5" fill="#9ca1ae" textLength="7.7" lengthAdjust="spacingAndGlyphs" font-weight="bold" stroke="none">D</text>
<g fill="none" stroke="#9a9da8" stroke-width="1.1">
<rect x="213.3" y="70.8" width="3.4" height="12.4"/><path d="M215 67.3 V70.8 M215 83.2 V86.8"/><rect x="222.5" y="73.2" width="3.4" height="7.6"/><path d="M224.2 70.2 V73.2 M224.2 80.8 V84"/>
<circle cx="258.4" cy="77.5" r="9"/><path d="M254.2 77.5 H262.6 M258.4 73.3 V81.7"/>
<path d="M354.2 85.8 C356.8 86.6 358.2 85.4 358.7 82.5 L361 71 C361.5 68.2 363.2 67.2 365.5 68.3 M356.5 75.2 H364.5"/><path d="M364 81.2 L368.3 85.6 M368.3 81.2 L364 85.6" stroke-width="1"/>
<path d="M464.5 72 L460.2 76.2 L464.5 80.5 M460.5 76.2 H468.5 C471.5 76.2 473 78.3 473 80.8 V82.6"/>
<path d="M496.2 72 L500.5 76.2 L496.2 80.5 M500.2 76.2 H492.2 C489.2 76.2 487.7 78.3 487.7 80.8 V82.6" stroke="#4a4e5a"/>
<rect x="1713.3" y="69.3" width="18.5" height="16.2" rx="2"/>
<path d="M1753.5 84.8 H1769 C1774.5 84.8 1774.5 76.5 1769.5 75.8 C1768.5 67 1756 67 1754.2 74.2 C1748.5 74.5 1747.5 84.8 1753.5 84.8 Z" stroke-dasharray="3 2"/>
<path d="M1818.3 75.3 L1822 79 L1825.7 75.3"/>
<path d="M1859.1 75.3 L1861.9 75.5 L1861.9 78.7 L1859.1 78.9 L1858.3 80.9 L1860.1 83.0 L1857.9 85.2 L1855.8 83.4 L1853.8 84.2 L1853.6 87.0 L1850.4 87.0 L1850.2 84.2 L1848.2 83.4 L1846.1 85.2 L1843.9 83.0 L1845.7 80.9 L1844.9 78.9 L1842.1 78.7 L1842.1 75.5 L1844.9 75.3 L1845.7 73.3 L1843.9 71.2 L1846.1 69.0 L1848.2 70.8 L1850.2 70.0 L1850.4 67.2 L1853.6 67.2 L1853.8 70.0 L1855.8 70.8 L1857.9 69.0 L1860.1 71.2 L1858.3 73.3 Z" stroke-linejoin="round"/>
<circle cx="1852.0" cy="77.1" r="2.9"/>
<path d="M1882 71.8 H1885.5 L1887 68.8 H1894 L1895.5 71.8 H1899 a1.8 1.8 0 0 1 1.8 1.8 V82.8 a1.8 1.8 0 0 1 -1.8 1.8 H1882 a1.8 1.8 0 0 1 -1.8 -1.8 V73.6 a1.8 1.8 0 0 1 1.8 -1.8 Z"/><circle cx="1890.5" cy="77.8" r="4"/>
</g>
<text x="275.0" y="82.2" font-size="14" fill="#a3a8b5" textLength="54.7" lengthAdjust="spacingAndGlyphs" stroke="#a3a8b5" stroke-width="0.22">Compare</text>
<text x="376.9" y="82.2" font-size="14" fill="#a3a8b5" textLength="61.3" lengthAdjust="spacingAndGlyphs" stroke="#a3a8b5" stroke-width="0.22">Indicators</text>
<text x="1777.7" y="82.0" font-size="14" fill="#a3a8b5" textLength="28.0" lengthAdjust="spacingAndGlyphs" stroke="#a3a8b5" stroke-width="0.22">Save</text>
<path d="M220.5 925 V962 M482.5 933 V955 M1793.5 933 V955" stroke="#2e3240" stroke-width="1"/>
<text x="78.3" y="949.2" font-size="12.5" fill="#d1d4dc" textLength="61.5" lengthAdjust="spacingAndGlyphs" stroke="#d1d4dc" stroke-width="0.22">Powered by</text>
<text x="143.2" y="949.2" font-size="12.5" fill="#2f8be6" textLength="64.2" lengthAdjust="spacingAndGlyphs" stroke="#2f8be6" stroke-width="0.22">TradingView</text>
<text x="237.6" y="948.9" font-size="13.5" fill="#80848f" textLength="15.0" lengthAdjust="spacingAndGlyphs" stroke="#80848f" stroke-width="0.22">1D</text>
<text x="267.2" y="948.9" font-size="13.5" fill="#80848f" textLength="15.0" lengthAdjust="spacingAndGlyphs" stroke="#80848f" stroke-width="0.22">5D</text>
<text x="297.8" y="948.9" font-size="13.5" fill="#80848f" textLength="16.2" lengthAdjust="spacingAndGlyphs" stroke="#80848f" stroke-width="0.22">1M</text>
<text x="328.7" y="948.9" font-size="13.5" fill="#80848f" textLength="16.4" lengthAdjust="spacingAndGlyphs" stroke="#80848f" stroke-width="0.22">3M</text>
<text x="359.7" y="948.9" font-size="13.5" fill="#80848f" textLength="16.7" lengthAdjust="spacingAndGlyphs" stroke="#80848f" stroke-width="0.22">6M</text>
<text x="391.5" y="948.9" font-size="13.5" fill="#80848f" textLength="14.2" lengthAdjust="spacingAndGlyphs" stroke="#80848f" stroke-width="0.22">1Y</text>
<text x="420.4" y="948.9" font-size="13.5" fill="#80848f" textLength="14.2" lengthAdjust="spacingAndGlyphs" stroke="#80848f" stroke-width="0.22">5Y</text>
<text x="449.5" y="948.9" font-size="13.5" fill="#80848f" textLength="15.6" lengthAdjust="spacingAndGlyphs" stroke="#80848f" stroke-width="0.22">All</text>
<g fill="none" stroke="#9a9da8" stroke-width="1.1">
<path d="M499 946 V939.8 a1.6 1.6 0 0 1 1.6 -1.6 H514 a1.6 1.6 0 0 1 1.6 1.6 V949.4 a1.6 1.6 0 0 1 -1.6 1.6 H507 M499.5 941.6 H515.4 M503 936.6 V939.6 M511.8 936.6 V939.6 M498.3 947.8 H505.5 M503.2 945.3 L505.7 947.8 L503.2 950.3"/>
</g>
<text x="1668.0" y="948.9" font-size="14" fill="#868a97" textLength="108.3" lengthAdjust="spacingAndGlyphs" stroke="none">08:09:27 (UTC+1)</text>
<text x="1810.3" y="949.3" font-size="14.5" fill="#9ca0aa" textLength="13.5" lengthAdjust="spacingAndGlyphs" stroke="#9ca0aa" stroke-width="0.22">%</text>
<text x="1838.2" y="949.3" font-size="14" fill="#9ca0aa" textLength="18.2" lengthAdjust="spacingAndGlyphs" stroke="#9ca0aa" stroke-width="0.22">log</text>
<text x="1870.9" y="949.3" font-size="14" fill="#9ca0aa" textLength="27.0" lengthAdjust="spacingAndGlyphs" stroke="#9ca0aa" stroke-width="0.22">auto</text>
<circle cx="1910.8" cy="945" r="23.2" fill="#272c38"/>
<path d="M1906 937.6 L1899.5 945 L1906 952.5" stroke="#3d90ee" stroke-width="2" fill="none"/>
<g fill="none" stroke="#9a9da8" stroke-width="1.1"><circle cx="1878" cy="910.5" r="5.2"/><path d="M1878 902.7 v2.2 M1878 916.1 v2.2 M1870.2 910.5 h2.2 M1883.6 910.5 h2.2 M1872.5 905 l1.6 1.6 M1881.9 914.4 l1.6 1.6 M1872.5 916 l1.6 -1.6 M1881.9 906.6 l1.6 -1.6"/></g>
<rect x="55.5" y="879" width="8" height="25" rx="4" fill="#131722" stroke="#2e3240" stroke-width="1"/>
<path d="M60.8 887.5 L58.2 891.5 L60.8 895.5" stroke="#9ca0aa" stroke-width="1" fill="none"/>
</svg>
</body></html>
